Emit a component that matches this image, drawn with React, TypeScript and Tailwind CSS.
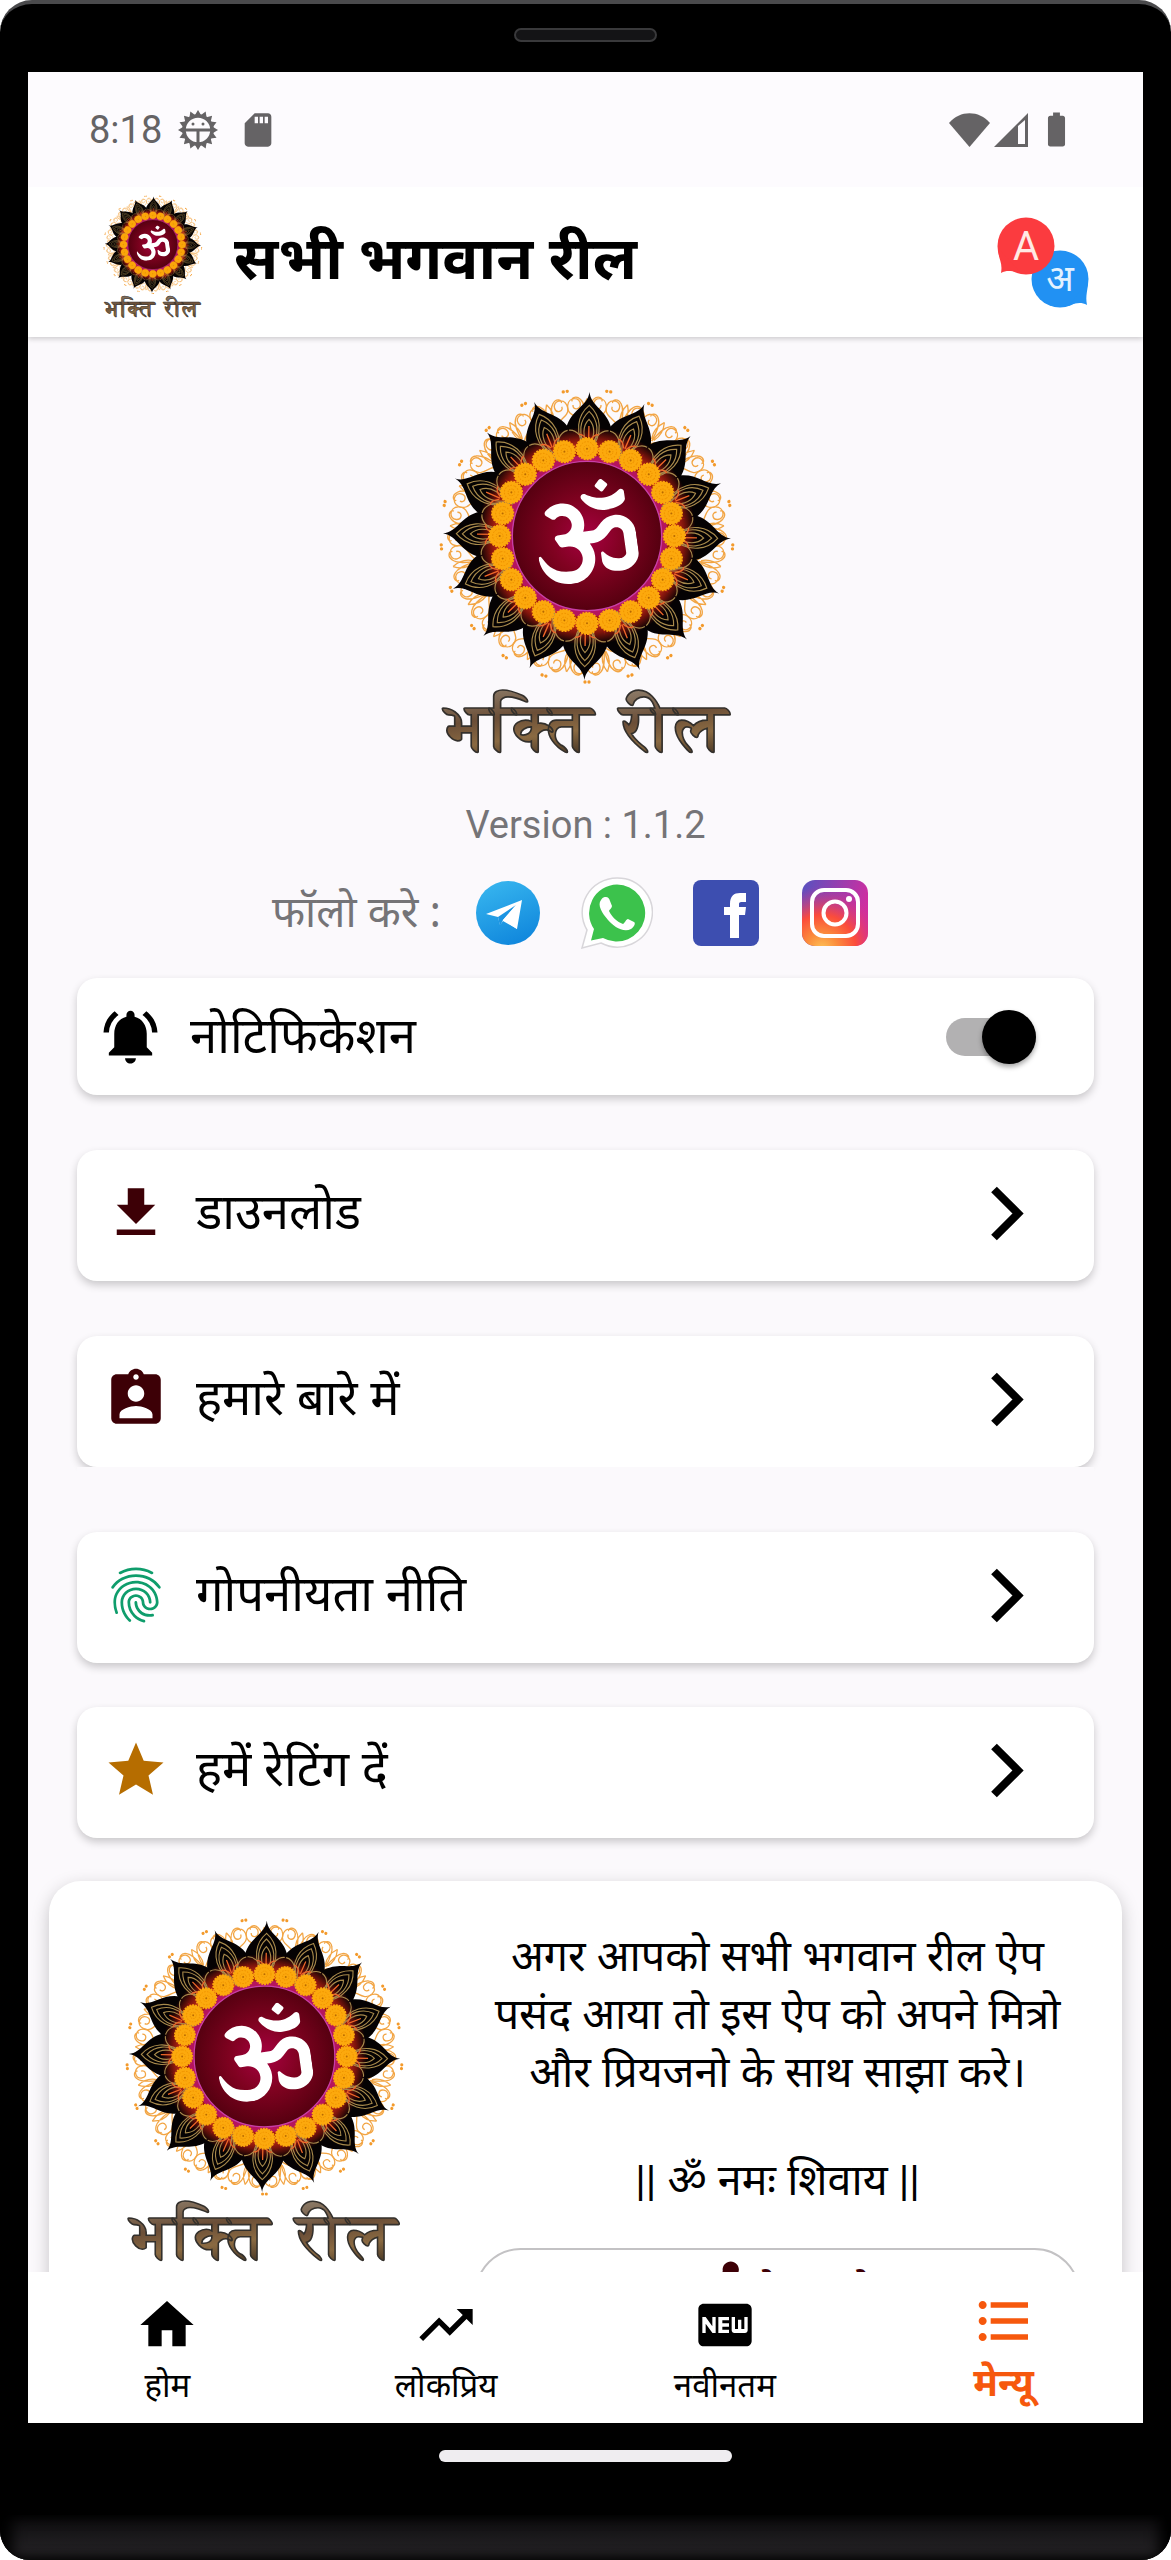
import { useState } from 'react';
import type { IconType } from 'react-icons';
import { FaOm } from 'react-icons/fa';
import {
    MdAssignmentInd,
    MdBatteryFull,
    MdFiberNew,
    MdFileDownload,
    MdFingerprint,
    MdFormatListBulleted,
    MdHome,
    MdNotificationsActive,
    MdSdStorage,
    MdShare,
    MdStar,
    MdTrendingUp,
} from 'react-icons/md';

const range = (n: number) => Array.from({ length: n }, (_, i) => i);

const SCROLL =
    'M0 -330C-8 -362 -62 -352 -58 -392C-55 -418 -20 -418 -20 -395C-20 -377 -44 -377 -42 -393M0 -345C-4 -380 -8 -400 -20 -410C-34 -424 -50 -412 -44 -404M-4 -350C-14 -372 -10 -395 0 -412';

interface LogoProps {
    id: string;
    className: string;
}

const Logo: React.FC<LogoProps> = ({ id, className }) => {
    return (
        <svg viewBox="0 0 990 1200" role="img" aria-label="भक्ति रील" className={className}>
            <defs>
                <radialGradient id={`${id}-disc`}>
                    <stop offset="0" stopColor="#a80042" />
                    <stop offset="0.5" stopColor="#7f0220" />
                    <stop offset="1" stopColor="#560010" />
                </radialGradient>
                <radialGradient id={`${id}-petal`} gradientUnits="userSpaceOnUse" cx="0" cy="0" r="430">
                    <stop offset="0.6" stopColor="#d8301a" />
                    <stop offset="0.68" stopColor="#7d140c" />
                    <stop offset="0.76" stopColor="#050203" />
                </radialGradient>
                <linearGradient id={`${id}-text`} x1="0" y1="0" x2="0.3" y2="1">
                    <stop offset="0" stopColor="#8f7f6c" />
                    <stop offset="0.45" stopColor="#6b4e37" />
                    <stop offset="0.75" stopColor="#8a6a42" />
                    <stop offset="1" stopColor="#54402a" />
                </linearGradient>
            </defs>
            <g transform="translate(498 498)">
                {range(21).map((i) => (
                    <g key={i} transform={`rotate(${(i * 360) / 21})`}>
                        <g fill="none" stroke="#f2a544" strokeWidth="4">
                            <path d={SCROLL} />
                            <path d={SCROLL} transform="scale(-1 1)" />
                        </g>
                    </g>
                ))}
                {range(21).map((i) => (
                    <g key={i} transform={`rotate(${((i + 0.5) * 360) / 21})`} fill="#f39a2b">
                        <circle cx="-6" cy="-438" r="5" />
                        <circle cx="6" cy="-438" r="5" />
                    </g>
                ))}
                <circle r="300" fill="#a3180f" />
                {range(16).map((i) => (
                    <g key={i} transform={`rotate(${i * 22.5 + 1})`}>
                        <path
                            d="M0 -432C-5 -388 -54 -380 -68 -322C-62 -285 -35 -250 0 -230C35 -250 62 -285 68 -322C54 -380 5 -388 0 -432Z"
                            fill={`url(#${id}-petal)`}
                        />
                        <g fill="none" stroke="#a88a4c" strokeWidth="3.5">
                            <path d="M0 -240C-12 -300 -40 -320 -62 -316M0 -240C12 -300 40 -320 62 -316" />
                            <path d="M0 -250C-50 -310 -32 -365 0 -392C32 -365 50 -310 0 -250" />
                            <path d="M0 -250C-40 -310 -24 -352 0 -374C24 -352 40 -310 0 -250" />
                            <path d="M0 -262C-24 -310 -14 -336 0 -350C14 -336 24 -310 0 -262" />
                        </g>
                        <g fill="none" stroke="#f0682a" strokeWidth="4">
                            <path d="M0 -285V-330M-4 -285C-12 -300 -20 -306 -30 -304M4 -285C12 -300 20 -306 30 -304" />
                        </g>
                    </g>
                ))}
                <circle r="242" fill="#b5145e" />
                <circle r="224" fill={`url(#${id}-disc)`} stroke="#c83fa8" strokeWidth="4" />
                {range(24).map((i) => (
                    <g key={i} transform={`rotate(${i * 15}) translate(0 -262)`}>
                        <circle r="32" fill="#fca90d" stroke="#fca90d" strokeWidth="6" strokeDasharray="6 3" />
                        <circle r="21" fill="none" stroke="#f09400" strokeWidth="3" strokeDasharray="5 4" />
                        <circle r="10" fill="none" stroke="#ee9200" strokeWidth="3" strokeDasharray="4 3" />
                        <circle r="3" fill="#b86a00" />
                    </g>
                ))}
                <g transform="rotate(-8)">
                    <FaOm x={-153} y={-164} size={300} color="#fff" />
                </g>
            </g>
            <g
                fontFamily="FreeSerif, serif"
                fontWeight="bold"
                fontSize="198"
                fill={`url(#${id}-text)`}
                stroke="#33302c"
                strokeWidth="5"
            >
                <text x="74" y="1138">
                    भक्ति
                </text>
                <text x="598" y="1138">
                    रील
                </text>
            </g>
        </svg>
    );
};

const DebugIcon = () => (
    <svg viewBox="0 0 40 40" className="size-10" aria-hidden="true">
        <g fill="#656365">
            {range(16).map((i) => (
                <path key={i} d="M17 5L20 0L23 5Z" transform={`rotate(${i * 22.5} 20 20)`} />
            ))}
        </g>
        <circle cx="20" cy="20" r="14" fill="none" stroke="#656365" strokeWidth="3.5" />
        <path d="M6 20H34M20 20V34" stroke="#656365" strokeWidth="3" />
        <circle cx="15" cy="14" r="1.5" fill="#656365" />
        <circle cx="25" cy="14" r="1.5" fill="#656365" />
    </svg>
);

const StatusBar = () => (
    <div className="relative z-10 flex h-[115px] shrink-0 items-center justify-between bg-[#fdfbfe] pr-[66px] pl-[61px] text-[#656365]">
        <div className="flex items-center">
            <span className="font-['Roboto',sans-serif] text-[38px] leading-none">8:18</span>
            <span className="ml-4">
                <DebugIcon />
            </span>
            <MdSdStorage size={40} className="ml-5" />
        </div>
        <div className="flex items-center">
            <svg viewBox="0 0 41 34" className="h-[34px] w-[41px]" aria-hidden="true">
                <path d="M20.5 34L0 10C11 -3 30 -3 41 10Z" fill="currentColor" />
            </svg>
            <svg viewBox="0 0 34 34" className="ml-1 size-[34px]" aria-hidden="true">
                <path fillRule="evenodd" d="M0 34L34 0V34ZM24 13V31H31V7Z" fill="currentColor" />
            </svg>
            <MdBatteryFull size={41} className="ml-2" />
        </div>
    </div>
);

const TranslateIcon = () => (
    <svg viewBox="0 0 92 91" className="h-[91px] w-[92px]" aria-hidden="true">
        <circle cx="63" cy="62" r="28.5" fill="#2191f3" />
        <path d="M91 64C91 74 88 78 90 88C84 85 80 86 72 88Z" fill="#2191f3" />
        <circle cx="29" cy="29" r="28.5" fill="#fb3b3f" />
        <path d="M1 31C1 42 6 45 4 56C10 53 14 54 24 56Z" fill="#fb3b3f" />
        <text x="29" y="43" textAnchor="middle" fontFamily="Roboto, sans-serif" fontSize="40" fill="#ffe9e4">
            A
        </text>
        <text x="63" y="74" textAnchor="middle" fontFamily="'Noto Sans', sans-serif" fontSize="36" fill="#e3f2ff">
            अ
        </text>
    </svg>
);

const TelegramIcon = () => (
    <svg viewBox="0 0 64 64" className="size-16" aria-hidden="true">
        <defs>
            <linearGradient id="telegram" x1="0.3" y1="0" x2="0.7" y2="1">
                <stop offset="0" stopColor="#36b4ee" />
                <stop offset="1" stopColor="#0f86dc" />
            </linearGradient>
        </defs>
        <circle cx="32" cy="32" r="32" fill="url(#telegram)" />
        <path d="M10 33L46 19L41 48L27 40L24 44L22 36Z" fill="#fff" />
        <path d="M22 36L40 24L27 39L24 45Z" fill="#1c95e3" />
        <path d="M27 39L40 24L41 48Z" fill="#fff" />
    </svg>
);

const WhatsappIcon = () => (
    <svg viewBox="0 0 72 72" className="size-[72px]" aria-hidden="true">
        <path
            d="M36 1A35 34.5 0 1 1 20 66L1 71L6 53A35 34.5 0 0 1 36 1Z"
            fill="#fff"
            stroke="#d8d6da"
            strokeWidth="1.5"
        />
        <path d="M36 7.5A28.5 28.5 0 1 1 22 61L10 63.5L13 52A28.5 28.5 0 0 1 36 7.5Z" fill="#3cc24c" />
        <path
            d="M25 20C27 20 28 21 29 24L31 29C31 31 28 33 28 34C31 40 36 45 42 47C44 46 45 42 47 42L53 45C55 46 53 50 50 52C42 56 32 49 27 43C21 36 16 28 20 23C22 20 23 20 25 20Z"
            fill="#fff"
        />
    </svg>
);

const FacebookIcon = () => (
    <svg viewBox="0 0 66 66" className="size-[66px]" aria-hidden="true">
        <rect width="66" height="66" rx="8" fill="#3d4eb0" />
        <path
            d="M37 58V35H31V27H37V24C37 16 41 13 47 13H53V22H49C46 22 46 23 46 25V27H53L52 35H46V58Z"
            fill="#fff"
        />
    </svg>
);

const InstagramIcon = () => (
    <svg viewBox="0 0 66 66" className="size-[66px]" aria-hidden="true">
        <defs>
            <linearGradient id="insta" x1="0" y1="0" x2="1" y2="0.3">
                <stop offset="0" stopColor="#5752c0" />
                <stop offset="1" stopColor="#cf2da0" />
            </linearGradient>
            <radialGradient id="insta-warm" cx="0.3" cy="1.05" r="0.95">
                <stop offset="0" stopColor="#fdc357" />
                <stop offset="0.25" stopColor="#fb8d3c" />
                <stop offset="0.55" stopColor="#fb4c3b" />
                <stop offset="1" stopColor="#d6308f" stopOpacity="0" />
            </radialGradient>
        </defs>
        <rect width="66" height="66" rx="13" fill="url(#insta)" />
        <rect width="66" height="66" rx="13" fill="url(#insta-warm)" />
        <g fill="none" stroke="#fff" strokeWidth="4">
            <rect x="10" y="10" width="46" height="46" rx="12" />
            <circle cx="33" cy="33" r="11.5" />
        </g>
        <circle cx="47" cy="19" r="3" fill="#fff" />
    </svg>
);

const ChevronIcon = () => (
    <svg viewBox="0 0 65 65" className="size-[65px]" aria-hidden="true">
        <path d="M20 8.5L44 32.5L20 56.5" fill="none" stroke="currentColor" strokeWidth="8" />
    </svg>
);

const SOCIALS = [
    { name: 'Telegram', Icon: TelegramIcon },
    { name: 'WhatsApp', Icon: WhatsappIcon },
    { name: 'Facebook', Icon: FacebookIcon },
    { name: 'Instagram', Icon: InstagramIcon },
];

interface MenuCardProps {
    icon: IconType;
    color: string;
    label: string;
}

const MenuCard: React.FC<MenuCardProps> = ({ icon: Icon, color, label }) => {
    return (
        <button
            type="button"
            className="flex w-full items-center rounded-[20px] bg-white pt-[30px] pr-[55px] pb-[35px] pl-[26px] text-left shadow-[0_4px_8px_rgba(0,0,0,0.2)]"
        >
            <Icon size={66} color={color} />
            <span className="ml-[27px] flex-1 pb-1.5 text-[49px] leading-[60px]">{label}</span>
            <ChevronIcon />
        </button>
    );
};

const NAV_ITEMS = [
    { label: 'होम', icon: MdHome },
    { label: 'लोकप्रिय', icon: MdTrendingUp },
    { label: 'नवीनतम', icon: MdFiberNew },
    { label: 'मेन्यू', icon: MdFormatListBulleted },
];

export default function App() {
    const [notify, setNotify] = useState<boolean>(true);
    const [active, setActive] = useState<number>(3);

    return (
        <div className="flex h-screen flex-col overflow-hidden rounded-t-[32px] rounded-b-[30px] border-t-4 border-[#4a4a4c] bg-black font-['Noto_Sans',sans-serif] text-black">
            <div className="flex h-[68px] shrink-0 justify-center pt-6">
                <div className="h-3.5 w-[143px] rounded-full border-2 border-[#39393b] bg-[#141416]" />
            </div>

            <div className="mx-7 flex min-h-0 flex-1 flex-col bg-[#fbf9fc]">
                <StatusBar />
                <header className="relative flex h-[150px] shrink-0 items-center bg-white pr-[54px] pl-[69px] shadow-[0_2px_5px_rgba(0,0,0,0.18)]">
                    <Logo id="brand" className="mb-3 h-[134px] w-[111px]" />
                    <h1 className="ml-[26px] flex-1 pb-3 text-[60px] leading-[72px] font-bold">सभी भगवान रील</h1>
                    <button type="button" aria-label="भाषा बदलें">
                        <TranslateIcon />
                    </button>
                </header>

                <main className="min-h-0 flex-1 overflow-hidden pt-[33px]">
                    <div className="flex flex-col items-center text-[#757477]">
                        <Logo id="hero" className="h-[400px] w-[330px]" />
                        <p className="mt-[31px] font-['Roboto',sans-serif] text-[38px] leading-[48px]">
                            Version : 1.1.2
                        </p>
                        <div className="mt-7 flex items-center pr-7">
                            <span className="pb-1 text-[43px] leading-[60px]">फॉलो करे :</span>
                            <div className="ml-[31px] flex gap-[37px]">
                                {SOCIALS.map(({ name, Icon }) => (
                                    <a
                                        key={name}
                                        href={`#${name.toLowerCase()}`}
                                        aria-label={name}
                                        className="flex size-[72px] items-center justify-center"
                                    >
                                        <Icon />
                                    </a>
                                ))}
                            </div>
                        </div>
                    </div>

                    <div className="px-[49px] pt-[29px]">
                        <label className="flex h-[117px] cursor-pointer items-center rounded-[20px] bg-white pr-[58px] pl-[21px] shadow-[0_4px_8px_rgba(0,0,0,0.2)]">
                            <MdNotificationsActive size={65} />
                            <span className="ml-[27px] flex-1 pb-1.5 text-[49px] leading-[60px]">नोटिफिकेशन</span>
                            <input
                                type="checkbox"
                                role="switch"
                                checked={notify}
                                onChange={() => setNotify(!notify)}
                                className="peer sr-only"
                            />
                            <span className="flex h-[38px] w-[90px] items-center rounded-full bg-[#b2b1b2] peer-checked:justify-end">
                                <span className="size-[54px] shrink-0 rounded-full bg-black shadow-[0_3px_5px_rgba(0,0,0,0.35)]" />
                            </span>
                        </label>
                        <div className="mt-[55px]">
                            <MenuCard icon={MdFileDownload} color="#3d0006" label="डाउनलोड" />
                        </div>
                        <div className="mt-[55px]">
                            <MenuCard icon={MdAssignmentInd} color="#3d0006" label="हमारे बारे में" />
                        </div>
                        <div className="relative bg-[#fbf9fc] pt-[65px]">
                            <MenuCard icon={MdFingerprint} color="#0f9d6c" label="गोपनीयता नीति" />
                        </div>
                        <div className="mt-11">
                            <MenuCard icon={MdStar} color="#b66d00" label="हमें रेटिंग दें" />
                        </div>
                    </div>

                    <section className="mx-[21px] mt-[43px] flex rounded-[32px] bg-white pt-[19px] pr-[42px] pb-10 pl-[59px] shadow-[0_6px_18px_rgba(0,0,0,0.22)]">
                        <Logo id="share" className="h-[377px] w-[311px] shrink-0" />
                        <div className="ml-14 flex-1 pt-[26px] text-center text-[43px] leading-[58px]">
                            <p>
                                अगर आपको सभी भगवान रील ऐप
                                <br />
                                पसंद आया तो इस ऐप को अपने मित्रो
                                <br />
                                और प्रियजनो के साथ साझा करे।
                            </p>
                            <p className="mt-[50px]">
                                <span className="font-['Roboto',sans-serif]">||</span> ॐ नमः शिवाय{' '}
                                <span className="font-['Roboto',sans-serif]">||</span>
                            </p>
                            <button
                                type="button"
                                className="mt-[39px] flex w-full items-center justify-center gap-1 rounded-[60px] border-2 border-[#c3c2c4] pt-1.5 pb-4 text-[39px] text-[#3d0006]"
                            >
                                <MdShare size={65} />
                                <span>शेयर करे</span>
                            </button>
                        </div>
                    </section>
                </main>

                <nav className="relative flex h-[151px] shrink-0 bg-white pt-[17px]">
                    {NAV_ITEMS.map(({ label, icon: Icon }, i) => (
                        <button
                            key={label}
                            type="button"
                            onClick={() => setActive(i)}
                            className={
                                i === active
                                    ? 'flex flex-1 flex-col items-center gap-2 text-[38px] leading-10 font-bold text-[#f6580d]'
                                    : 'flex flex-1 flex-col items-center gap-2 pt-1 text-[33px] leading-10'
                            }
                        >
                            <Icon size={64} />
                            <span>{label}</span>
                        </button>
                    ))}
                </nav>
            </div>

            <div className="flex h-[92px] shrink-0 justify-center pt-[27px]">
                <div className="h-3 w-[293px] rounded-full bg-[#efedf0]" />
            </div>
            <div className="h-[45px] shrink-0 bg-linear-to-b from-[#0d0c0e] to-[#29272a] shadow-[inset_12px_0_14px_#000,inset_-12px_0_14px_#000]" />
        </div>
    );
}
